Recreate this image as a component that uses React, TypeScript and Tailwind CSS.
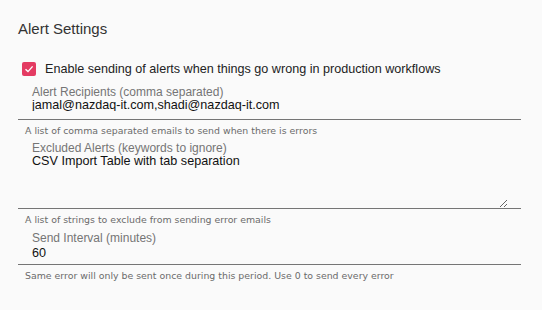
import { useState } from "react";

const sans = "font-['Liberation_Sans',Arial,sans-serif]";
const helperFont = "font-['DejaVu_Sans',Verdana,sans-serif]";

interface FieldProps {
  label: string;
  value: string;
  helper: string;
  multiline?: boolean;
  valueGap?: string;
  bottomPad?: string;
  onChange: (v: string) => void;
}

function Field({ label, value, helper, multiline, valueGap = "mt-0", bottomPad = "pb-[8px]", onChange }: FieldProps) {
  return (
    <div>
      <div className={`border-b border-[#757575] pl-[14px] ${multiline ? "pr-[13px]" : bottomPad}`}>
        <div className={`${sans} text-[12px] leading-[12px] text-[#757575]`}>{label}</div>
        {multiline ? (
          <textarea
            value={value}
            onChange={(e) => onChange(e.target.value)}
            className={`${sans} ${valueGap} block w-full h-[53px] text-[12.6px] leading-[13px] text-[#111] bg-transparent outline-none resize-y p-0`}
          />
        ) : (
          <input
            value={value}
            onChange={(e) => onChange(e.target.value)}
            className={`${sans} ${valueGap} block w-full h-[13px] text-[12.6px] leading-[13px] text-[#111] bg-transparent outline-none p-0`}
          />
        )}
      </div>
      <div className={`${helperFont} pl-[7px] mt-[5px] text-[9.4px] leading-[12px] text-[#6b6b6b]`}>{helper}</div>
    </div>
  );
}

export default function App() {
  const [enabled, setEnabled] = useState(true);
  const [recipients, setRecipients] = useState("jamal@nazdaq-it.com,shadi@nazdaq-it.com");
  const [excluded, setExcluded] = useState("CSV Import Table with tab separation");
  const [interval, setInterval] = useState("60");

  return (
    <div className="w-[542px] h-[310px] bg-[#fafafa] pl-[18px] pr-[21px] pt-[19px]">
      <h2 className={`${sans} text-[15px] leading-[20px] text-[#333]`}>Alert Settings</h2>

      <label className="flex items-center mt-[20px] h-[20px] cursor-pointer">
        <span
          onClick={() => setEnabled(!enabled)}
          className={`ml-[4px] w-[14px] h-[14px] rounded-[2px] flex items-center justify-center ${
            enabled ? "bg-[#e43b62]" : "border-2 border-[#757575]"
          }`}
        >
          {enabled && (
            <svg width="10" height="10" viewBox="0 0 10 10" fill="none">
              <path d="M1.5 5.2 L4 7.6 L8.6 2.4" stroke="#fff" strokeWidth="1.4" />
            </svg>
          )}
        </span>
        <span className={`${sans} ml-[9px] text-[12.6px] text-[#222]`}>
          Enable sending of alerts when things go wrong in production workflows
        </span>
      </label>

      <div className="mt-[7px]">
        <Field
          label="Alert Recipients (comma separated)"
          value={recipients}
          onChange={setRecipients}
          helper="A list of comma separated emails to send when there is errors"
        />
      </div>
      <div className="mt-[5px]">
        <Field
          label="Excluded Alerts (keywords to ignore)"
          value={excluded}
          onChange={setExcluded}
          multiline
          valueGap="mt-[1px]"
          helper="A list of strings to exclude from sending error emails"
        />
      </div>
      <div className="mt-[6px]">
        <Field
          label="Send Interval (minutes)"
          value={interval}
          onChange={setInterval}
          valueGap="mt-[2px]"
          bottomPad="pb-[5px]"
          helper="Same error will only be sent once during this period. Use 0 to send every error"
        />
      </div>
    </div>
  );
}
